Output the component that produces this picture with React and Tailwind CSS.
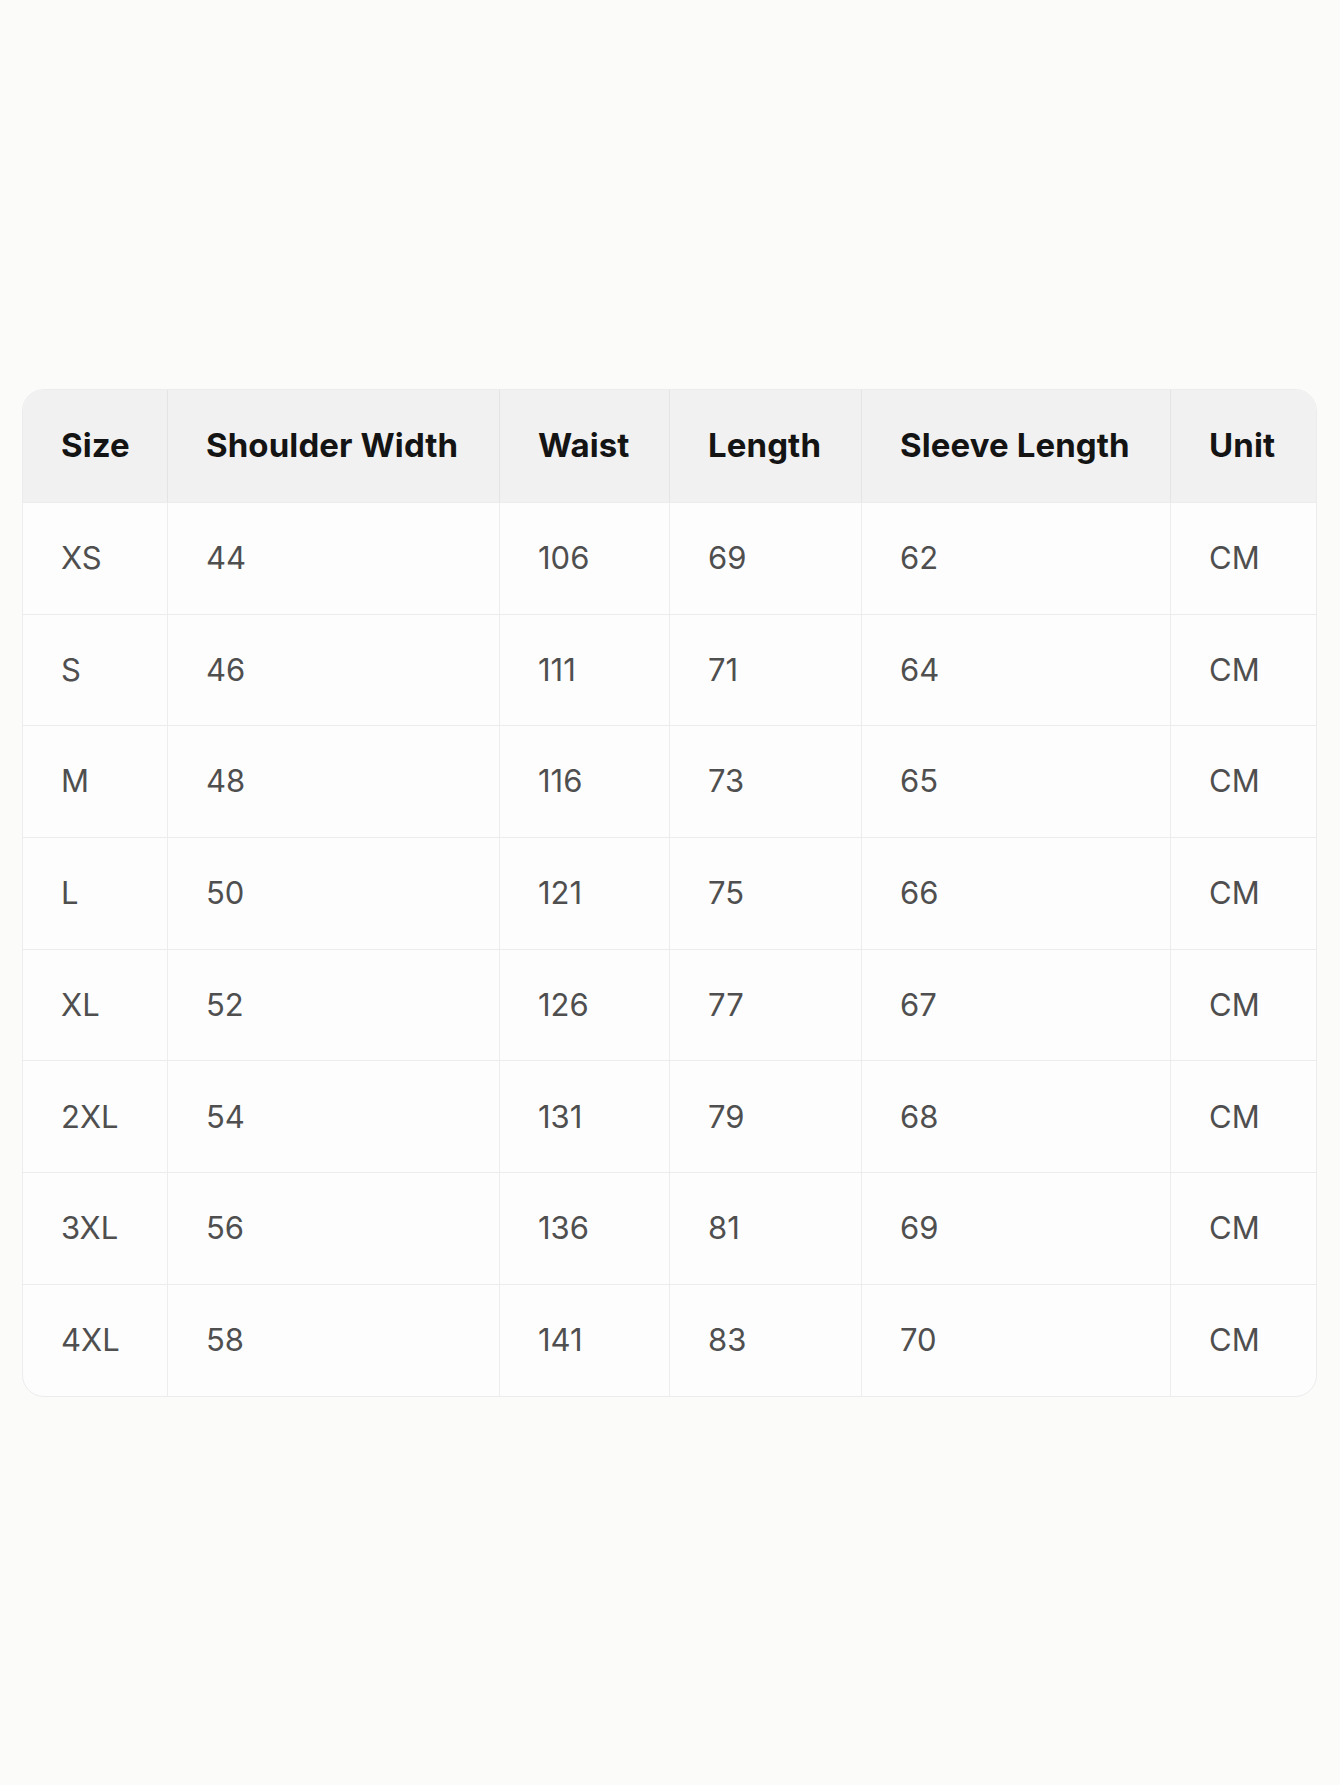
const headers = ["Size", "Shoulder Width", "Waist", "Length", "Sleeve Length", "Unit"];

const rows = [
  ["XS", "44", "106", "69", "62", "CM"],
  ["S", "46", "111", "71", "64", "CM"],
  ["M", "48", "116", "73", "65", "CM"],
  ["L", "50", "121", "75", "66", "CM"],
  ["XL", "52", "126", "77", "67", "CM"],
  ["2XL", "54", "131", "79", "68", "CM"],
  ["3XL", "56", "136", "81", "69", "CM"],
  ["4XL", "58", "141", "83", "70", "CM"],
];

// column widths measured off the chart
const grid = "grid grid-cols-[145px_332px_170px_192px_309px_145px]";

export default function App() {
  return (
    <div className="min-h-[1785px] w-[1340px] bg-[#fbfbfa] pt-[389px] font-['Inter','Liberation_Sans',sans-serif]">
      <div className="ml-[22px] w-[1295px] overflow-hidden rounded-[22px] border border-[#ececec] bg-[#fdfdfd]">
        <div className={grid + " h-[112px] bg-[#f1f1f1]"}>
          {headers.map((h, i) => (
            <div
              key={h}
              className={
                "flex items-center pl-[38px] text-[33px] font-bold tracking-[0.1px] text-[#141414] " +
                (i < 5 ? "border-r border-[#e4e4e4]" : "")
              }
            >
              {h}
            </div>
          ))}
        </div>
        {rows.map((r) => (
          <div key={r[0]} className={grid + " h-[111.7px] border-t border-[#ececec]"}>
            {r.map((c, i) => (
              <div
                key={i}
                className={
                  "flex items-center pl-[38px] text-[31px] text-[#4f4f4f] " +
                  (i < 5 ? "border-r border-[#ededed]" : "")
                }
              >
                {c}
              </div>
            ))}
          </div>
        ))}
      </div>
    </div>
  );
}
